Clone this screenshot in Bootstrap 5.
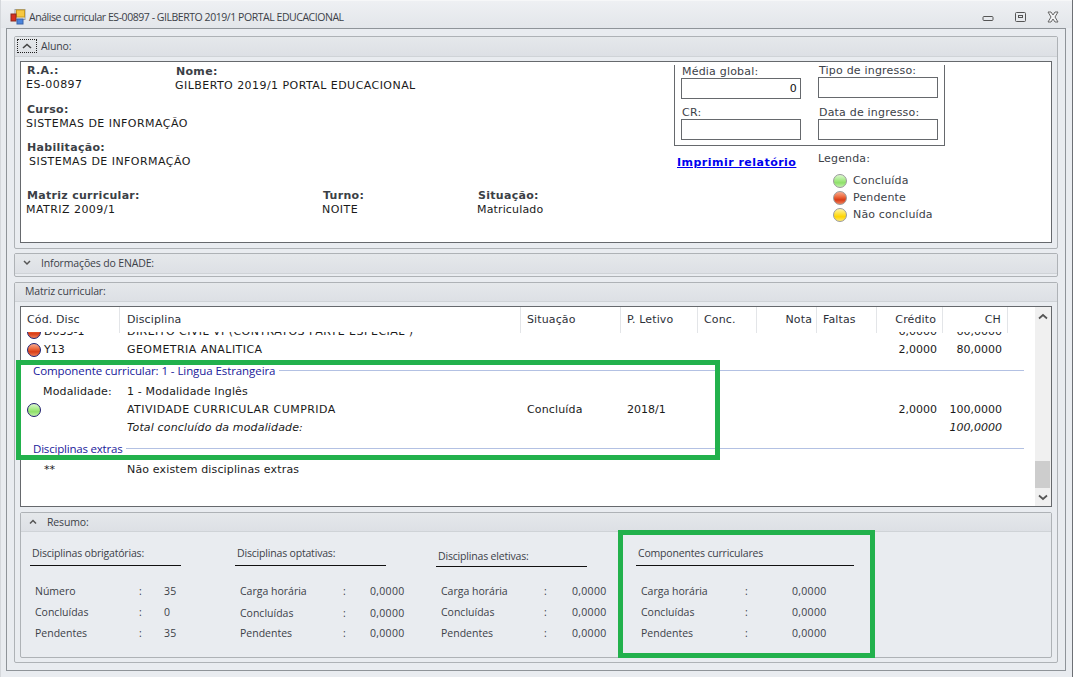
<!DOCTYPE html>
<html lang="pt-BR">
<head>
<meta charset="utf-8">
<title>Análise curricular</title>
<link href="https://cdn.jsdelivr.net/npm/bootstrap@5.3.0/dist/css/bootstrap.min.css" rel="stylesheet">
<style>
html,body{height:677px;overflow:hidden}
body{position:relative;background:#e9ecf0;font:11px/14px "DejaVu Sans",sans-serif;color:#1a1a1a;border-right:1px solid #6d7075;border-left:1px solid #d5d8dc}
.sg{font-family:"Open Sans","Noto Sans",sans-serif;color:#3c4148}
.titlebar{height:28px;background:linear-gradient(#eef0f3,#e3e6ea);padding:4px 0 0 9px;border-top:1px solid #f6f7f8}
.titlebar .ttl{margin-left:3px;font-size:10.5px;letter-spacing:-.45px}
.winbtn{width:32px}
.wctl{margin-right:3px}
.winframe{margin:0 6px 0 5px;height:643px;border:1px solid #8f9499;padding:7px}
.pnl{border:1px solid #aeb2b6;border-radius:2px;background:#e9ecf0}
.pnl-h{height:20px;padding-bottom:1px;background:linear-gradient(#e5e8eb,#dde0e5);border-bottom:1px solid #cfd3d7;font-size:10.5px;letter-spacing:-.15px}
.p-aluno{height:213px;margin-bottom:4px}
.p-enade{height:24px;margin-bottom:5px}
.p-matriz{height:381px}
.p-matriz>.pnl-h{height:19px;padding:0 0 2px 10px}
.expbtn{width:20px;height:14px;border:1px dotted #222;margin:0 4px 0 2px}
.chev{width:20px;margin:0 4px 0 2px}
.whitebox{background:#fff;border:1px solid #66696d}
.p-aluno .whitebox{height:182px;margin:4px 5px 0}
.lft{width:653px;padding:2px 0 0 6px}
.b{font-weight:700;color:#3b3f46;letter-spacing:.3px}
.vl{margin-left:-1px;letter-spacing:.45px}
.lc{letter-spacing:.15px}
.fld-nome{margin:1px 0 0 0}
.w149{width:149px}
.w296{width:296px}
.w155{width:155px}
.mtc{margin-top:10px}
.mth{margin-top:10px}
.mtm{margin-top:20px}
.ind2{margin-left:2px}
.grpbox{width:271px;height:81px;margin-top:3px;border:1px solid #66696d;border-top:0;padding:2px 0 0 6px;color:#3c4148;letter-spacing:.2px}
.gcol{width:137px;flex:none}
.gl{display:block;line-height:10px;margin-left:1px;margin-bottom:1px}
.gl.up{margin-top:-1px}
.gl.sec{margin-top:9px}
.gl.sec2{margin-top:10px}
.gbox{width:120px;height:21px;border:1px solid #66696d;background:#fff;text-align:right;padding:3px 3px 0 0;color:#111}
.prn{width:144px;padding:10px 0 0 3px;font-weight:700;color:#0000ee;text-decoration:underline;letter-spacing:.48px}
.leg{color:#3c4148;padding-top:6px;letter-spacing:.15px}
.leg-r{height:17px;padding-left:15px}
.leg-t{height:15px;margin-bottom:5px}
.dot{width:14px;height:14px;border-radius:50%;flex:none;display:inline-block;border:1px solid #9a9a9a}
.dot.g{background:linear-gradient(#dcf8cf 0,#a4ea84 45%,#8fe06a 65%,#c2f2ac 100%)}
.dot.r{background:linear-gradient(#f7ab90 0,#ee6a3e 40%,#d93c17 65%,#f0805a 100%)}
.dot.y{background:linear-gradient(#fff4a8 0,#ffe23c 40%,#ffd400 65%,#ffea70 100%)}
.dot.nv{border-color:#20206f}
.leg-r .dot{margin-right:6px}
.p-matriz .whitebox{height:201px;margin:4px 5px 0}
.gridw{width:1014px}
.hd-row,.bd-row{display:grid;grid-template-columns:99px 401px 100px 77px 59px 60px 60px 66px 65px 27px}
.hd-row{height:25px;line-height:26px;color:#2c3038;letter-spacing:.12px}
.hd-row>div{border-right:1px solid #e3e5e8;padding:0 6px;white-space:nowrap}
.hd-row>div:last-child{border:0}
.hd-row>div:nth-child(2),.bd-row>div:nth-child(2){padding-left:7px}
.hd-row>div:nth-child(6){padding-right:4px}
.bodyclip{height:174px;overflow:hidden}
.bodyin{margin-top:-9px}
.bd-row{height:18px;line-height:18px}
.bd-row>div{padding:0 6px;white-space:nowrap}
.r{text-align:right}
.it{font-style:italic}
.grp{height:24px;padding:0 11px 0 12px;font-size:11.5px;letter-spacing:-.08px}
.grp span{color:#20209a}
.grp i{flex:1;height:1px;background:#b3c1e3;margin-left:4px;margin-top:-2px}
.grp.ex{letter-spacing:-.2px}
.cod-ic{gap:3px}
.bd-row>.pad-mod{padding-left:22px}
.bd-row>.pad-ast{padding-left:23px}
.sbar{width:16px;background:#f0f0f0;color:#555}
.sb-thumb{height:27px;background:#cdcdcd;margin-right:1px}
.sb-a{height:18px}
.sb-sp{flex:1}
.p-resumo{height:146px;margin:5px 5px 0}
.p-resumo .pnl-h{height:19px}
.rcol{width:201px;padding-left:9px}
.rcol.f{width:205px}
.rcol.e{width:200px}
.rcol.last{width:auto}
.rhead{height:21px;width:151px;padding-left:2px;line-height:16px;font-size:10.5px;letter-spacing:-.18px;border-bottom:1px solid #111;margin-top:13px}
.rcol.e .rhead{height:22px;padding-top:4px;margin-top:13px;line-height:15px}
.rcol.last .rhead{width:218px}
.rrow{display:flex;height:21px;line-height:21px;padding-left:5px;font-size:10.5px}
.rrow .vv{letter-spacing:.3px}
.rrows{margin-top:15px}
.rcol.e .rrows{margin-top:14px}
.rl{width:104px}
.rc{width:25px}
.rcol.o .rl{width:103px}
.rcol.o .rc{width:27px}
.rcol.e .rl{width:103px}
.rcol.e .rc{width:28px}
.rcol.last .rl{width:104px}
.rcol.last .rc{width:47px}
.rrow.dn{line-height:23px}
.gbar{position:absolute;border:5px solid #22b14c;pointer-events:none}
.gb1{left:15px;top:360px;width:704px;height:100px}
.gb2{left:617px;top:530px;width:257px;height:128px}
</style>
</head>
<body>
<div class="titlebar d-flex align-items-center sg">
  <svg width="16" height="16" viewBox="0 0 16 16"><rect x="5" y="0.5" width="10" height="10" fill="#e8e8e8" stroke="#9aa0a8"/><rect x="6.5" y="1" width="8" height="7" fill="#f8c840" stroke="#c89a20"/><rect x="1" y="5" width="5" height="7" fill="#d83020" stroke="#8a2a20"/><rect x="7" y="10" width="6" height="5" fill="#4a84dc" stroke="#3a62a8"/></svg>
  <span class="ttl">Análise curricular ES-00897 - GILBERTO 2019/1 PORTAL EDUCACIONAL</span>
  <div class="ms-auto d-flex align-items-center wctl">
    <svg class="winbtn" width="32" height="12" viewBox="0 0 32 12"><rect x="10" y="5.5" width="10" height="4" rx="1" fill="none" stroke="#555"/></svg>
    <svg class="winbtn" width="32" height="12" viewBox="0 0 32 12"><rect x="10.5" y="1.5" width="10" height="9" rx="1" fill="none" stroke="#555"/><rect x="13.5" y="4.5" width="4" height="2" fill="none" stroke="#555"/></svg>
    <svg class="winbtn" width="32" height="12" viewBox="0 0 32 12"><path d="M11 1l3 0 2 3 2-3 3 0-3 5 3 5-3 0-2-3-2 3-3 0 3-5z" fill="#f2f3f5" stroke="#666"/></svg>
  </div>
</div>

<div class="winframe">
  <section class="pnl p-aluno">
    <div class="pnl-h d-flex align-items-center sg">
      <div class="expbtn d-flex align-items-center justify-content-center"><svg width="10" height="6" viewBox="0 0 10 6"><path d="M1 5l4-3.5L9 5" fill="none" stroke="#444" stroke-width="1.6"/></svg></div>
      <span>Aluno:</span>
    </div>
    <div class="whitebox d-flex">
      <div class="lft">
        <div class="d-flex">
          <div class="w149"><div class="b">R.A.:</div><div class="vl">ES-00897</div></div>
          <div class="fld-nome"><div class="b">Nome:</div><div class="vl">GILBERTO 2019/1 PORTAL EDUCACIONAL</div></div>
        </div>
        <div class="mtc"><div class="b">Curso:</div><div class="vl">SISTEMAS DE INFORMAÇÃO</div></div>
        <div class="mth"><div class="b">Habilitação:</div><div class="vl ind2">SISTEMAS DE INFORMAÇÃO</div></div>
        <div class="mtm d-flex">
          <div class="w296"><div class="b">Matriz curricular:</div><div class="vl">MATRIZ 2009/1</div></div>
          <div class="w155"><div class="b">Turno:</div><div class="vl">NOITE</div></div>
          <div><div class="b">Situação:</div><div class="vl lc">Matriculado</div></div>
        </div>
      </div>
      <div>
        <div class="grpbox d-flex">
          <div class="gcol">
            <span class="gl">Média global:</span><div class="gbox">0</div>
            <span class="gl sec">CR:</span><div class="gbox"></div>
          </div>
          <div class="gcol">
            <span class="gl up">Tipo de ingresso:</span><div class="gbox"></div>
            <span class="gl sec2">Data de ingresso:</span><div class="gbox"></div>
          </div>
        </div>
        <div class="d-flex">
          <a class="prn" href="#">Imprimir relatório</a>
          <div class="leg">
            <div class="leg-t">Legenda:</div>
            <div class="leg-r d-flex align-items-center"><span class="dot g"></span>Concluída</div>
            <div class="leg-r d-flex align-items-center"><span class="dot r"></span>Pendente</div>
            <div class="leg-r d-flex align-items-center"><span class="dot y"></span>Não concluída</div>
          </div>
        </div>
      </div>
    </div>
  </section>

  <section class="pnl p-enade">
    <div class="pnl-h d-flex align-items-center sg">
      <div class="chev d-flex align-items-center justify-content-center"><svg width="10" height="6" viewBox="0 0 10 6"><path d="M2 1l3 3 3-3" fill="none" stroke="#555" stroke-width="1.5"/></svg></div>
      <span>Informações do ENADE:</span>
    </div>
  </section>

  <section class="pnl p-matriz">
    <div class="pnl-h d-flex align-items-center sg"><span>Matriz curricular:</span></div>
    <div class="whitebox d-flex">
      <div class="gridw">
        <div class="hd-row">
          <div>Cód. Disc</div><div>Disciplina</div><div>Situação</div><div>P. Letivo</div><div>Conc.</div><div class="r">Nota</div><div>Faltas</div><div class="r">Crédito</div><div class="r">CH</div><div></div>
        </div>
        <div class="bodyclip">
          <div class="bodyin">
            <div class="bd-row"><div class="d-flex align-items-center cod-ic"><span class="dot r nv"></span>D033-1</div><div class="vl ms-0">DIREITO CIVIL VI (CONTRATOS PARTE ESPECIAL )</div><div></div><div></div><div></div><div></div><div></div><div class="r">6,0000</div><div class="r">60,0000</div><div></div></div>
            <div class="bd-row"><div class="d-flex align-items-center cod-ic"><span class="dot r nv"></span>Y13</div><div class="vl ms-0">GEOMETRIA ANALITICA</div><div></div><div></div><div></div><div></div><div></div><div class="r">2,0000</div><div class="r">80,0000</div><div></div></div>
            <div class="grp d-flex align-items-center sg"><span>Componente curricular: 1 - Lingua Estrangeira</span><i></i></div>
            <div class="bd-row"><div class="pad-mod lc">Modalidade:</div><div class="lc">1 - Modalidade Inglês</div><div></div><div></div><div></div><div></div><div></div><div></div><div></div><div></div></div>
            <div class="bd-row"><div class="d-flex align-items-center"><span class="dot g nv"></span></div><div class="vl ms-0">ATIVIDADE CURRICULAR CUMPRIDA</div><div class="lc">Concluída</div><div>2018/1</div><div></div><div></div><div></div><div class="r">2,0000</div><div class="r">100,0000</div><div></div></div>
            <div class="bd-row it"><div></div><div class="lc">Total concluído da modalidade:</div><div></div><div></div><div></div><div></div><div></div><div></div><div class="r">100,0000</div><div></div></div>
            <div class="grp ex d-flex align-items-center sg"><span>Disciplinas extras</span><i></i></div>
            <div class="bd-row"><div class="pad-ast">**</div><div class="lc">Não existem disciplinas extras</div><div></div><div></div><div></div><div></div><div></div><div></div><div></div><div></div></div>
          </div>
        </div>
      </div>
      <div class="sbar d-flex flex-column">
        <div class="sb-a d-flex align-items-center justify-content-center"><svg width="10" height="7" viewBox="0 0 10 7"><path d="M1 5.5l4-3.5 4 3.5" fill="none" stroke="#555" stroke-width="1.7"/></svg></div>
        <div class="sb-sp"></div>
        <div class="sb-thumb"></div>
        <div class="sb-a d-flex align-items-center justify-content-center"><svg width="10" height="7" viewBox="0 0 10 7"><path d="M1 1.5l4 3.5 4-3.5" fill="none" stroke="#555" stroke-width="1.7"/></svg></div>
      </div>
    </div>
    <section class="pnl p-resumo">
      <div class="pnl-h d-flex align-items-center sg">
        <div class="chev d-flex align-items-center justify-content-center"><svg width="10" height="6" viewBox="0 0 10 6"><path d="M2 4.5l3-3 3 3" fill="none" stroke="#555" stroke-width="1.5"/></svg></div>
        <span>Resumo:</span>
      </div>
      <div class="d-flex sg">
        <div class="rcol f">
          <div class="rhead">Disciplinas obrigatórias:</div>
          <div class="rrows">
            <div class="rrow"><span class="rl">Número</span><span class="rc">:</span><span class="vv">35</span></div>
            <div class="rrow"><span class="rl">Concluídas</span><span class="rc">:</span><span class="vv">0</span></div>
            <div class="rrow"><span class="rl">Pendentes</span><span class="rc">:</span><span class="vv">35</span></div>
          </div>
        </div>
        <div class="rcol o">
          <div class="rhead">Disciplinas optativas:</div>
          <div class="rrows">
            <div class="rrow"><span class="rl">Carga horária</span><span class="rc">:</span><span class="vv">0,0000</span></div>
            <div class="rrow dn"><span class="rl">Concluídas</span><span class="rc">:</span><span class="vv">0,0000</span></div>
            <div class="rrow"><span class="rl">Pendentes</span><span class="rc">:</span><span class="vv">0,0000</span></div>
          </div>
        </div>
        <div class="rcol e">
          <div class="rhead">Disciplinas eletivas:</div>
          <div class="rrows">
            <div class="rrow"><span class="rl">Carga horária</span><span class="rc">:</span><span class="vv">0,0000</span></div>
            <div class="rrow"><span class="rl">Concluídas</span><span class="rc">:</span><span class="vv">0,0000</span></div>
            <div class="rrow"><span class="rl">Pendentes</span><span class="rc">:</span><span class="vv">0,0000</span></div>
          </div>
        </div>
        <div class="rcol last">
          <div class="rhead">Componentes curriculares</div>
          <div class="rrows">
            <div class="rrow"><span class="rl">Carga horária</span><span class="rc">:</span><span class="vv">0,0000</span></div>
            <div class="rrow"><span class="rl">Concluídas</span><span class="rc">:</span><span class="vv">0,0000</span></div>
            <div class="rrow"><span class="rl">Pendentes</span><span class="rc">:</span><span class="vv">0,0000</span></div>
          </div>
        </div>
      </div>
    </section>
  </section>
</div>
<div class="gbar gb1"></div>
<div class="gbar gb2"></div>
<script src="https://cdn.jsdelivr.net/npm/bootstrap@5.3.0/dist/js/bootstrap.bundle.min.js"></script>
</body>
</html>
